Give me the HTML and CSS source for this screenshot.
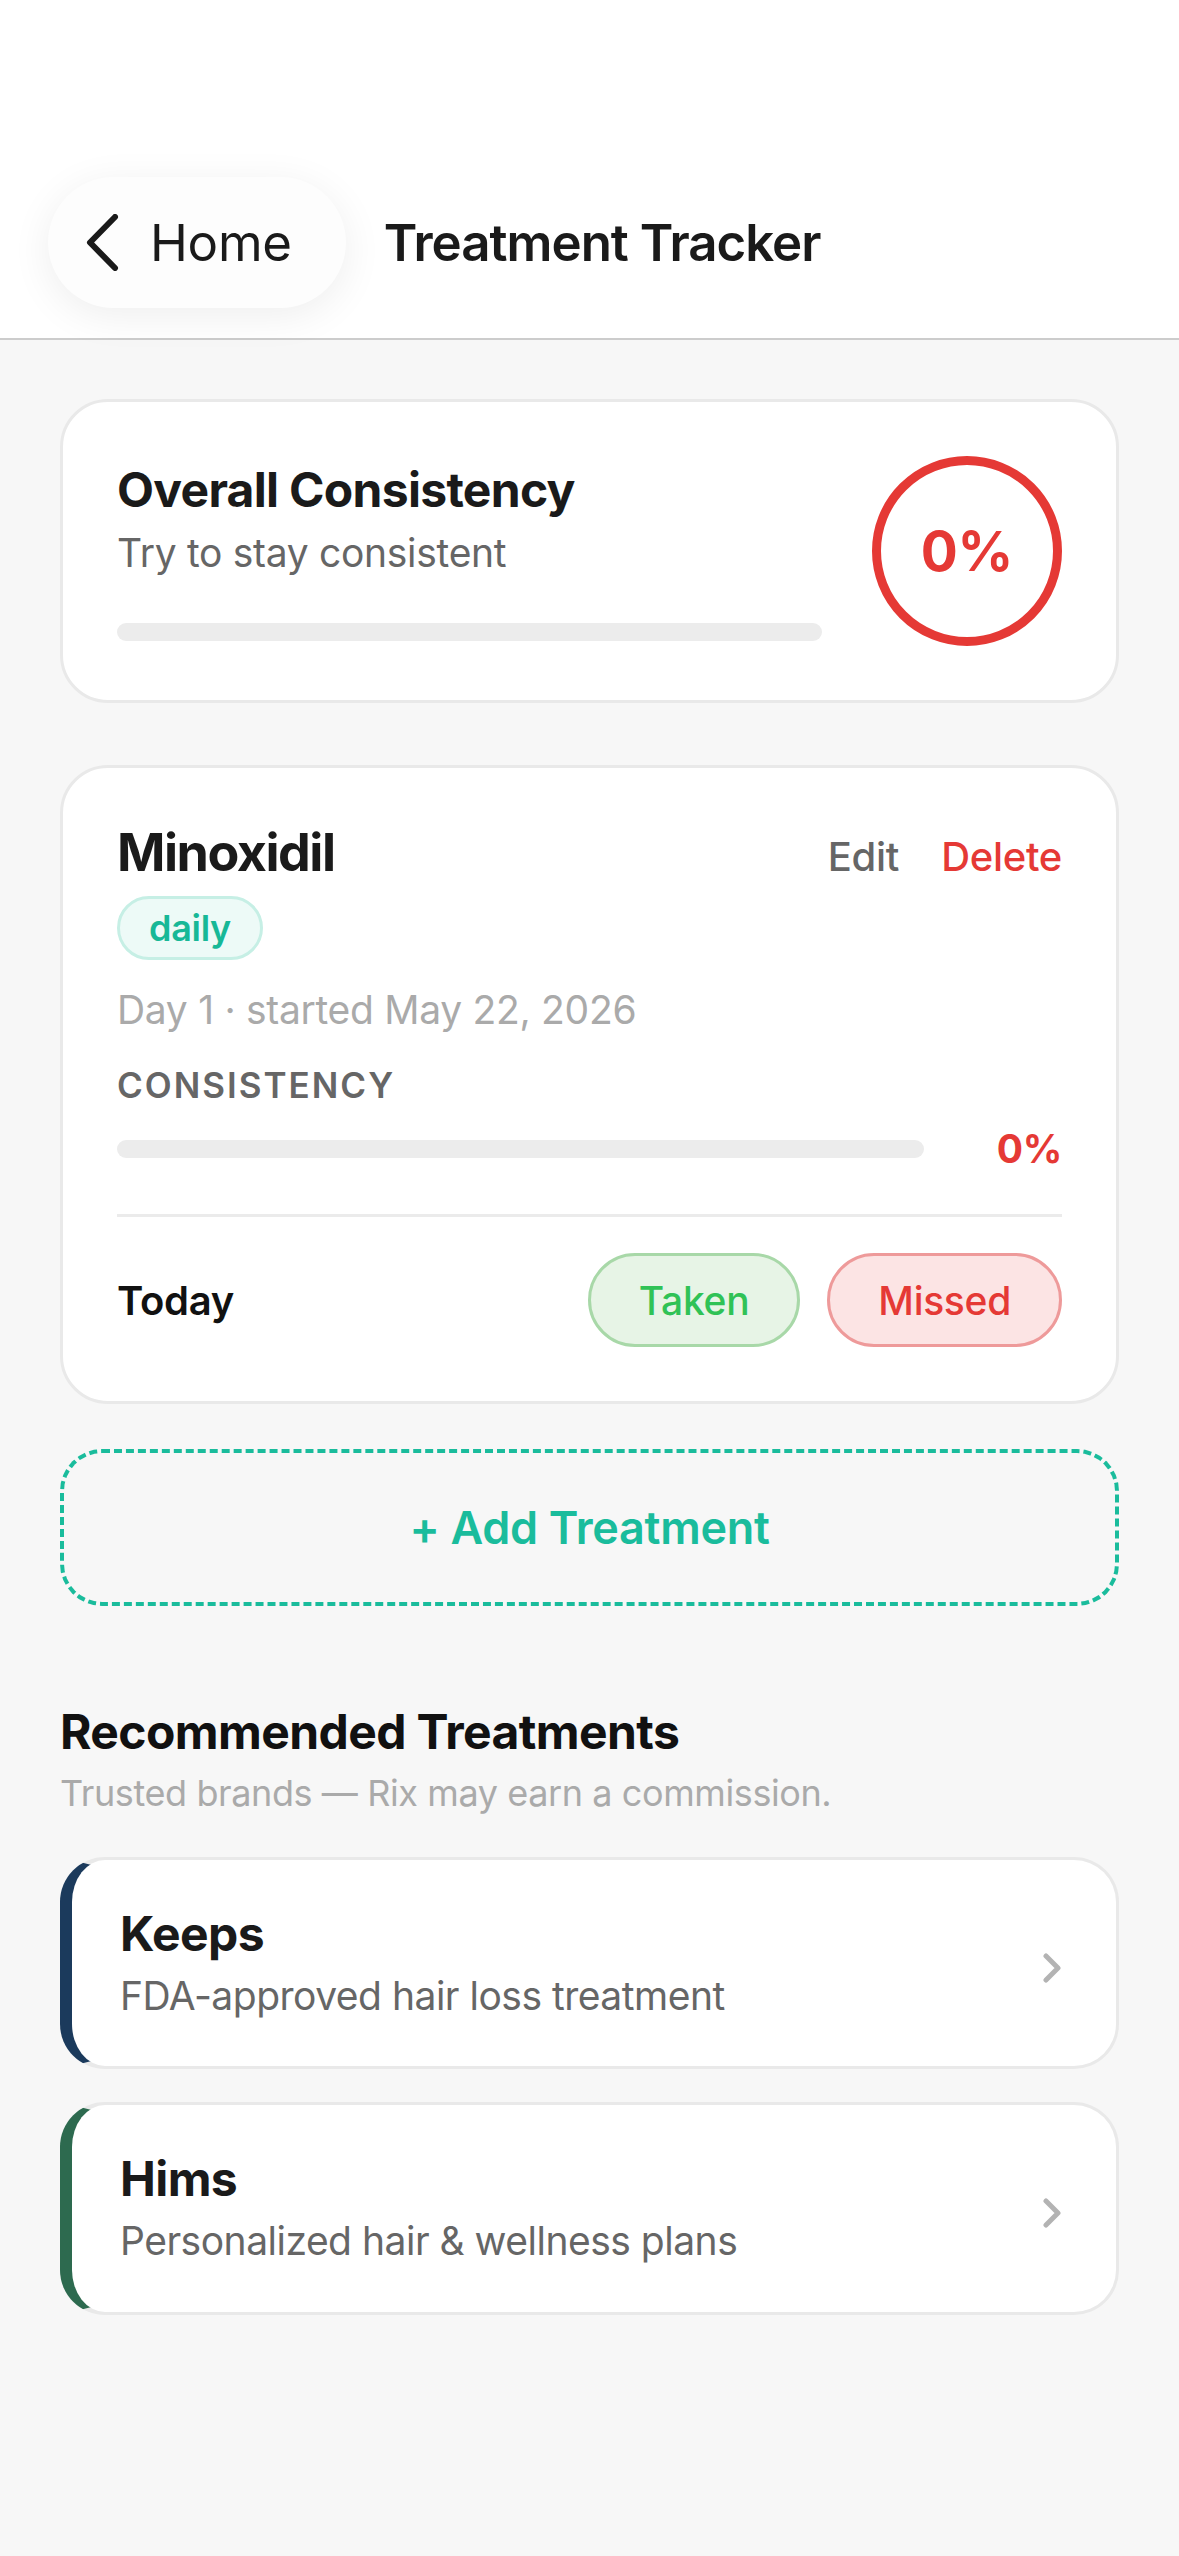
FILE: index.html
```html
<!doctype html>
<html lang="en">
<head>
	<meta charset="UTF-8">
	<title>Treatment Tracker</title>
	<link rel="stylesheet" href="styles.css">
</head>
<body>
	<header class="topbar">
		<a class="back-pill" href="#">
			<svg class="back-icon" width="34" height="57" viewBox="0 0 34 57"><path d="M30 3 L5 28.5 L30 54" /></svg>
			<span>Home</span>
		</a>
		<h1 class="page-title">Treatment Tracker</h1>
	</header>

	<main class="content">
		<section class="card overall">
			<div class="overall-info">
				<h2 class="card-title">Overall Consistency</h2>
				<p class="card-sub">Try to stay consistent</p>
				<div class="bar"><div class="bar-fill" style="width:0%"></div></div>
			</div>
			<div class="ring">0%</div>
		</section>

		<section class="card treatment">
			<div class="treatment-head">
				<h2 class="treatment-name">Minoxidil</h2>
				<div class="treatment-actions">
					<a href="#" class="edit">Edit</a>
					<a href="#" class="delete">Delete</a>
				</div>
			</div>
			<span class="badge">daily</span>
			<p class="started">Day 1 · started May 22, 2026</p>
			<div class="label">CONSISTENCY</div>
			<div class="progress-row">
				<div class="bar"><div class="bar-fill" style="width:0%"></div></div>
				<span class="percent">0%</span>
			</div>
			<div class="divider"></div>
			<div class="today-row">
				<span class="today">Today</span>
				<div class="today-btns">
					<button class="pill taken">Taken</button>
					<button class="pill missed">Missed</button>
				</div>
			</div>
		</section>

		<button class="add-btn">+ Add Treatment</button>

		<section class="recommended">
			<h2 class="rec-title">Recommended Treatments</h2>
			<p class="rec-sub">Trusted brands — Rix may earn a commission.</p>

			<a href="#" class="brand-card keeps">
				<div class="brand-text">
					<div class="brand-name">Keeps</div>
					<div class="brand-desc">FDA-approved hair loss treatment</div>
				</div>
				<svg class="brand-arrow" width="20" height="30" viewBox="0 0 20 30"><path d="M4 3 L16 15 L4 27" /></svg>
			</a>

			<a href="#" class="brand-card hims">
				<div class="brand-text">
					<div class="brand-name">Hims</div>
					<div class="brand-desc">Personalized hair &amp; wellness plans</div>
				</div>
				<svg class="brand-arrow" width="20" height="30" viewBox="0 0 20 30"><path d="M4 3 L16 15 L4 27" /></svg>
			</a>
		</section>
	</main>
</body>
</html>
```

FILE: styles.css
```css
*{
	box-sizing: border-box;
}
body{
	margin: 0;
	background: #f7f7f7;
	font-family: Inter, "Noto Sans", sans-serif;
	color: #1a1a1a;
	min-height: 2556px;
	letter-spacing: -0.3px;
}
a{
	text-decoration: none;
	color: inherit;
}
button{
	font-family: inherit;
	letter-spacing: inherit;
	cursor: pointer;
}
h1,h2,p{
	margin: 0;
}

/* top bar */
.topbar{
	background: #fff;
	padding: 177px 48px 30px;
	display: flex;
	align-items: center;
	gap: 38px;
	border-bottom: 2px solid #cccccc;
}
.back-pill{
	height: 131px;
	padding: 0 54px 0 37px;
	border-radius: 66px;
	background: #fdfdfd;
	box-shadow: 0 8px 40px rgba(0,0,0,0.07);
	display: flex;
	align-items: center;
	gap: 31px;
	font-size: 51px;
	color: #1a1a1a;
}
.back-icon path{
	fill: none;
	stroke: #1a1a1a;
	stroke-width: 6;
	stroke-linecap: round;
	stroke-linejoin: round;
}
.page-title{
	font-size: 51px;
	font-weight: 600;
	letter-spacing: -1px;
	color: #1a1a1a;
}

/* content */
.content{
	padding: 59px 60px 0;
	display: flex;
	flex-direction: column;
}
.card{
	background: #fff;
	border: 3px solid #e9e9e9;
	border-radius: 48px;
	padding: 54px;
}
.overall{
	display: flex;
	align-items: center;
	gap: 50px;
}
.overall-info{
	flex: 1;
}
.card-title{
	font-size: 48px;
	font-weight: 700;
	line-height: 1.2;
	letter-spacing: -0.7px;
}
.card-sub{
	font-size: 39px;
	line-height: 1.3;
	color: #666;
	margin-top: 10px;
}
.bar{
	height: 18px;
	border-radius: 9px;
	background: #ececec;
	overflow: hidden;
}
.bar-fill{
	height: 100%;
	background: #e53935;
}
.overall .bar{
	margin-top: 44px;
}
.ring{
	width: 190px;
	height: 190px;
	border-radius: 50%;
	border: 9px solid #e53935;
	display: flex;
	align-items: center;
	justify-content: center;
	font-size: 55px;
	font-weight: 700;
	color: #e53935;
}

/* treatment card */
.treatment{
	margin-top: 62px;
	display: flex;
	flex-direction: column;
	align-items: flex-start;
}
.treatment-head{
	width: 100%;
	display: flex;
	justify-content: space-between;
	align-items: baseline;
}
.treatment-name{
	font-size: 52px;
	font-weight: 700;
	line-height: 1.2;
	letter-spacing: -1.5px;
}
.treatment-actions{
	display: flex;
	gap: 42px;
	font-size: 40px;
	font-weight: 500;
}
.edit{
	color: #666;
}
.delete{
	color: #e53935;
}
.badge{
	margin-top: 12px;
	height: 64px;
	padding: 0 29px;
	border: 3px solid #c6efe5;
	background: #edfaf7;
	border-radius: 32px;
	color: #17b897;
	font-size: 36px;
	font-weight: 600;
	display: flex;
	align-items: center;
}
.started{
	margin-top: 25px;
	font-size: 39px;
	line-height: 1.3;
	color: #aaaaaa;
}
.label{
	margin-top: 27px;
	font-size: 35px;
	line-height: 1.3;
	font-weight: 600;
	letter-spacing: 2px;
	color: #666;
}
.progress-row{
	margin-top: 15px;
	width: 100%;
	display: flex;
	align-items: center;
	gap: 36px;
}
.progress-row .bar{
	flex: 1;
}
.percent{
	width: 102px;
	text-align: right;
	font-size: 39px;
	line-height: 1.3;
	font-weight: 700;
	color: #e53935;
}
.divider{
	margin-top: 40px;
	width: 100%;
	height: 3px;
	background: #ebebeb;
}
.today-row{
	margin-top: 36px;
	width: 100%;
	display: flex;
	justify-content: space-between;
	align-items: center;
}
.today{
	font-size: 40px;
	font-weight: 600;
	color: #111;
}
.today-btns{
	display: flex;
	gap: 27px;
}
.pill{
	height: 94px;
	padding: 0 48px;
	border-radius: 47px;
	border: 3px solid;
	font-size: 39px;
	font-weight: 500;
}
.taken{
	background: #e7f4e6;
	border-color: #a8d8a8;
	color: #30c256;
}
.missed{
	background: #fce4e4;
	border-color: #ee9a9a;
	color: #e53935;
}

/* add button */
.add-btn{
	margin-top: 45px;
	height: 157px;
	border: 4px dashed #1abc9c;
	border-radius: 42px;
	background: transparent;
	color: #1abc9c;
	font-size: 45px;
	font-weight: 600;
}

/* recommended */
.recommended{
	margin-top: 96px;
	display: flex;
	flex-direction: column;
}
.rec-title{
	font-size: 48px;
	font-weight: 700;
	line-height: 1.25;
	letter-spacing: -0.6px;
	color: #111;
}
.rec-sub{
	margin-top: 8px;
	font-size: 36px;
	line-height: 1.3;
	letter-spacing: -0.4px;
	color: #aaaaaa;
}
.brand-card{
	margin-top: 40px;
	background: #fff;
	border: 3px solid #e9e9e9;
	border-left: 12px solid #1b3a5c;
	border-radius: 45px;
	padding: 45px 54px 45px 48px;
	display: flex;
	align-items: center;
	justify-content: space-between;
}
.brand-card + .brand-card{
	margin-top: 33px;
}
.hims{
	border-left-color: #2d6a4f;
}
.brand-name{
	font-size: 48px;
	font-weight: 700;
	line-height: 1.2;
	letter-spacing: -0.6px;
	color: #1a1a1a;
}
.brand-desc{
	margin-top: 8px;
	font-size: 39px;
	line-height: 1.3;
	letter-spacing: -0.5px;
	color: #666;
}
.brand-arrow{
	margin-top: 10px;
}
.brand-arrow path{
	fill: none;
	stroke: #b3b3b3;
	stroke-width: 5;
	stroke-linecap: round;
	stroke-linejoin: round;
}
```
